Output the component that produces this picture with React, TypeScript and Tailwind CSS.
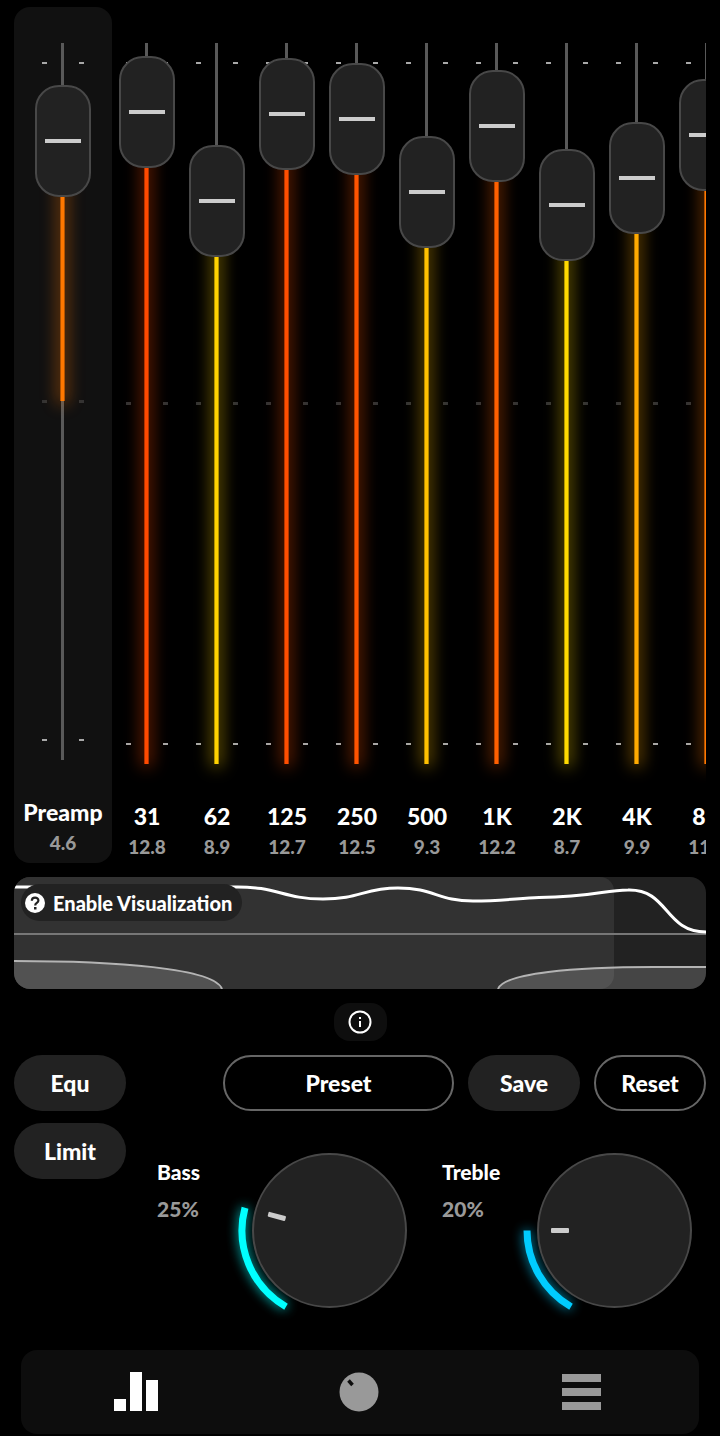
import { useState } from "react";
import clsx from "clsx";

const bands = [
  { label: "31", value: 12.8, color: "text-[#ff4a00]" },
  { label: "62", value: 8.9, color: "text-[#ffd200]" },
  { label: "125", value: 12.7, color: "text-[#ff4e00]" },
  { label: "250", value: 12.5, color: "text-[#ff5400]" },
  { label: "500", value: 9.3, color: "text-[#ffc000]" },
  { label: "1K", value: 12.2, color: "text-[#ff6000]" },
  { label: "2K", value: 8.7, color: "text-[#ffda00]" },
  { label: "4K", value: 9.9, color: "text-[#ffaa00]" },
  { label: "8K", value: 11.8, color: "text-[#ff7800]" },
];

const THUMB = 112;

type FaderProps = {
  label: string;
  initial: number;
  limit: number;
  travel: number;
  color: string;
  fromCenter?: boolean;
};

function Ticks({ className }: { className: string }) {
  return (
    <div className={clsx("absolute inset-x-0 flex justify-center gap-8", className)}>
      <span className="w-[5px] bg-current" />
      <span className="w-[5px] bg-current" />
    </div>
  );
}

function Fader({ label, initial, limit, travel, color, fromCenter }: FaderProps) {
  const [value, setValue] = useState(initial);
  const id = `band-${label}`;
  const thumbY = THUMB / 2 + ((limit - value) / (2 * limit)) * travel;
  const fillEnd = fromCenter ? (THUMB + travel) / 2 : travel + 76;

  return (
    <div className="flex w-full flex-col items-center">
      <div className="relative w-full" style={{ height: travel + THUMB }}>
        <Ticks className="top-14 h-0.5 text-[#a8a8a8]" />
        <Ticks className="top-1/2 -mt-px h-[3px] text-[#333333]" />
        <Ticks className="bottom-[55px] h-0.5 text-[#a8a8a8]" />
        <div className="absolute inset-x-0 top-[37px] bottom-9 flex justify-center pr-px">
          <div className="w-[3px] bg-[#595959]" />
        </div>
        <div
          className={clsx("absolute inset-x-0 flex justify-center pr-px", color)}
          style={{ top: Math.min(thumbY, fillEnd), height: Math.abs(fillEnd - thumbY) }}
        >
          <div className="w-[5px] border-x border-black/30 bg-current shadow-[0_0_16px_3px_color-mix(in_srgb,currentColor_42%,transparent)]" />
        </div>
        <div className="absolute inset-0 flex justify-center">
          <input
            id={id}
            type="range"
            min={-limit}
            max={limit}
            step={0.1}
            value={value}
            onChange={(e) => setValue(Number(e.target.value))}
            className="m-0 h-full w-14 cursor-pointer appearance-none bg-transparent outline-none [direction:rtl] [writing-mode:vertical-lr] [&::-webkit-slider-thumb]:h-28 [&::-webkit-slider-thumb]:w-14 [&::-webkit-slider-thumb]:appearance-none [&::-webkit-slider-thumb]:rounded-3xl [&::-webkit-slider-thumb]:border-2 [&::-webkit-slider-thumb]:border-[#484848] [&::-webkit-slider-thumb]:bg-[#222222] [&::-webkit-slider-thumb]:bg-[linear-gradient(#cccccc,#cccccc)] [&::-webkit-slider-thumb]:bg-[length:36px_4px] [&::-webkit-slider-thumb]:bg-center [&::-webkit-slider-thumb]:bg-no-repeat"
          />
        </div>
      </div>
      <label htmlFor={id} className="text-[23px] leading-8 font-black text-white">
        {label}
      </label>
      <output htmlFor={id} className="text-[19px] leading-[30px] font-black text-[#999999]">
        {value.toFixed(1)}
      </output>
    </div>
  );
}

function Visualization() {
  return (
    <section className="relative h-28 overflow-hidden rounded-2xl bg-[#222222]">
      <svg className="h-full w-full" viewBox="0 0 692 112" preserveAspectRatio="none" fill="none">
        <path d="M0 0H586A14 14 0 0 1 600 14V98A14 14 0 0 1 586 112H0Z" fill="#323232" />
        <path d="M0 57H692" stroke="#777777" strokeWidth="2" />
        <path d="M0 84C100 84 201 91 208 112H0Z" fill="#ffffff" fillOpacity="0.16" />
        <path d="M0 84C100 84 201 91 208 112" stroke="#b4b4b4" strokeWidth="2" />
        <path d="M484 112C490 96 560 90 640 90H692V112Z" fill="#ffffff" fillOpacity="0.16" />
        <path d="M484 112C490 96 560 90 640 90H692" stroke="#b4b4b4" strokeWidth="2" />
        <path
          d="M0 10H219C264 9 268 22 309 22C346 22 350 11 384 11C420 11 424 24 459 24C490 24 505 21 525 20.500C580 20 590 13 614 13C655 12 650 55 692 55"
          stroke="#ffffff"
          strokeWidth="3"
        />
      </svg>
      <button className="absolute top-[7px] left-[7px] flex h-[37px] items-center gap-2 rounded-full bg-[#222222] pr-2.5 pl-1 text-xl font-black text-white">
        <svg width="20" height="20" viewBox="0 0 20 20" fill="none">
          <circle cx="10" cy="10" r="10" fill="#ffffff" />
          <path
            d="M6.800 7.800C6.800 3.600 13.400 3.700 13.400 7.600C13.400 10 10.200 9.800 10.200 12.400"
            stroke="#222222"
            strokeWidth="2.200"
          />
          <rect x="9" y="14" width="2.500" height="2.500" fill="#222222" />
        </svg>
        Enable Visualization
      </button>
    </section>
  );
}

type PillProps = { children: string; outline?: boolean; className?: string };

function Pill({ children, outline, className = "w-28" }: PillProps) {
  return (
    <button
      className={clsx(
        "h-14 rounded-full text-[23px] font-black text-white",
        outline ? "border-2 border-[#666666]" : "bg-[#222222]",
        className
      )}
    >
      {children}
    </button>
  );
}

function Knob({ label, initial, color }: { label: string; initial: number; color: string }) {
  const [value, setValue] = useState(initial);
  // 300 degree sweep that begins at the lower left
  const sweep = value * 3;
  const end = ((120 + sweep) * Math.PI) / 180;
  const arc = `M34 153.700A88 88 0 ${sweep > 180 ? 1 : 0} 1 ${78 + 88 * Math.cos(end)} ${77.5 + 88 * Math.sin(end)}`;

  return (
    <div className="flex justify-between pr-3.5 pl-[21px]">
      <div className="flex flex-col text-[21px] leading-[37px] font-black">
        <label htmlFor={label} className="text-white">
          {label}
        </label>
        <output htmlFor={label} className="text-[#999999]">
          {value}%
        </output>
      </div>
      <div className="relative h-[155px] w-[155px]">
        <svg className="h-full w-full overflow-visible" viewBox="0 0 155 155" fill="none">
          <g className={color}>
            <path d={arc} stroke="currentColor" strokeWidth="7" className="opacity-80 blur-[6px]" />
            <path d={arc} stroke="currentColor" strokeWidth="7" />
          </g>
          <circle cx="77.500" cy="77.500" r="76.500" fill="#222222" stroke="#484848" strokeWidth="2" />
          <rect
            x="14"
            y="75"
            width="18"
            height="5"
            rx="1"
            fill="#cccccc"
            transform={`rotate(${sweep - 60} 77.500 77.500)`}
          />
        </svg>
        <input
          id={label}
          type="range"
          value={value}
          onChange={(e) => setValue(Number(e.target.value))}
          className="absolute inset-0 m-0 h-full w-full cursor-pointer opacity-0"
        />
      </div>
    </div>
  );
}

function BottomNav() {
  return (
    <nav className="mx-[7px] mt-[42px] grid h-21 grid-cols-3 rounded-2xl bg-[#0d0d0d] pr-1.5 pl-1">
      <button aria-label="Equalizer" className="flex items-center justify-center text-white">
        <svg width="44" height="40" viewBox="0 0 44 40" fill="currentColor">
          <rect x="0" y="27" width="12" height="12" />
          <rect x="16" y="0" width="12" height="39" />
          <rect x="32" y="8" width="12" height="31" />
        </svg>
      </button>
      <button aria-label="Effects" className="flex items-center justify-center text-[#999999]">
        <svg width="40" height="40" viewBox="0 0 40 40" fill="none">
          <circle cx="20" cy="20" r="19.500" fill="currentColor" />
          <path d="M9.500 8.500L13.500 13" stroke="#0d0d0d" strokeWidth="3.500" />
        </svg>
      </button>
      <button aria-label="Menu" className="flex items-center justify-center text-[#999999]">
        <svg width="40" height="38" viewBox="0 0 40 38" fill="currentColor">
          <rect y="1" width="39" height="8" />
          <rect y="15" width="39" height="8" />
          <rect y="29" width="39" height="8" />
        </svg>
      </button>
    </nav>
  );
}

export default function App() {
  return (
    <div className="min-h-screen bg-black px-3.5 pt-[7px] pb-0.5 font-['Lato','Open_Sans',sans-serif]">
      <section className="flex items-start">
        <div className="w-[98px] shrink-0 rounded-2xl bg-[#111111] pb-[5px]">
          <div className="-mt-px">
            <Fader label="Preamp" initial={4.6} limit={6} travel={678} color="text-[#ff7800]" fromCenter />
          </div>
        </div>
        <div className="-mt-px flex min-w-0 flex-1 overflow-hidden">
          {bands.map((band) => (
            <div key={band.label} className="w-[70px] shrink-0">
              <Fader label={band.label} initial={band.value} limit={15} travel={682} color={band.color} />
            </div>
          ))}
        </div>
      </section>

      <div className="mt-3.5 flex flex-col gap-3.5">
        <Visualization />

        <button
          aria-label="Info"
          className="flex h-[38px] w-[53px] items-center justify-center self-center rounded-2xl bg-[#0e0e0e] text-white"
        >
          <svg width="24" height="24" viewBox="0 0 24 24" fill="none" stroke="currentColor" strokeWidth="2">
            <circle cx="12" cy="12" r="10.500" />
            <path d="M12 11V17M12 7V9" />
          </svg>
        </button>

        <section className="flex">
          <div className="flex w-28 shrink-0 flex-col gap-3">
            <Pill>Equ</Pill>
            <Pill>Limit</Pill>
          </div>
          <div className="min-w-0 flex-1">
            <div className="flex gap-3.5 pl-[97px]">
              <Pill outline className="flex-1">
                Preset
              </Pill>
              <Pill>Save</Pill>
              <Pill outline>Reset</Pill>
            </div>
            <div className="mt-[42px] grid grid-cols-2 pl-2.5">
              <Knob label="Bass" initial={25} color="text-[#00ffff]" />
              <Knob label="Treble" initial={20} color="text-[#00ccff]" />
            </div>
          </div>
        </section>
      </div>

      <BottomNav />
    </div>
  );
}
